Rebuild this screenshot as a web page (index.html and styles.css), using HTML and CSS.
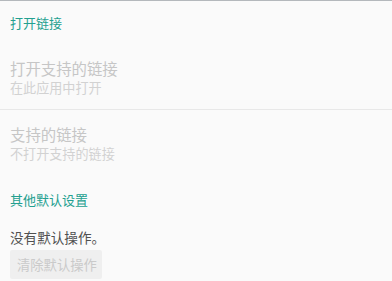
FILE: index.html
```html
<!DOCTYPE html>
<html lang="zh-CN">
<head>
<meta charset="utf-8">
<link rel="stylesheet" href="styles.css">
</head>
<body>
<div class="page">
  <div class="category first">打开链接</div>
  <div class="item divided">
    <div class="title">打开支持的链接</div>
    <div class="summary">在此应用中打开</div>
  </div>
  <div class="item">
    <div class="title">支持的链接</div>
    <div class="summary">不打开支持的链接</div>
  </div>
  <div class="category second">其他默认设置</div>
  <div class="defaults">
    <div class="note">没有默认操作。</div>
    <div class="button">清除默认操作</div>
  </div>
</div>
</body>
</html>
```
FILE: styles.css
```css
html, body {
  margin: 0;
  padding: 0;
  background: #fafafa;
}
body {
  font-family: "Noto Sans CJK SC", "Noto Sans", sans-serif;
  width: 392px;
  height: 281px;
  overflow: hidden;
}
.page {
  border-top: 1px solid #b4b8bc;
}
.category {
  font-size: 13px;
  line-height: 20px;
  color: #23a090;
  padding-left: 10px;
}
.category.first {
  padding-top: 12px;
}
.category.second {
  padding-top: 26px;
}
.item {
  padding: 25px 10px 11px;
}
.item + .item {
  padding-top: 14px;
  padding-bottom: 0;
}
.item.divided {
  border-bottom: 1px solid #e8e8e8;
}
.title {
  font-size: 15.4px;
  line-height: 20px;
  color: #c6c6c6;
}
.summary {
  font-size: 13.1px;
  line-height: 20px;
  color: #d2d2d2;
}
.defaults {
  padding: 17px 10px 0;
}
.note {
  font-size: 13.6px;
  line-height: 20px;
  color: #505050;
}
.button {
  margin-top: 3px;
  display: inline-block;
  width: 92px;
  height: 29px;
  box-sizing: border-box;
  padding-left: 7px;
  background: #efefef;
  color: #cacaca;
  font-size: 13.3px;
  line-height: 30px;
  border-radius: 2px;
}
```
